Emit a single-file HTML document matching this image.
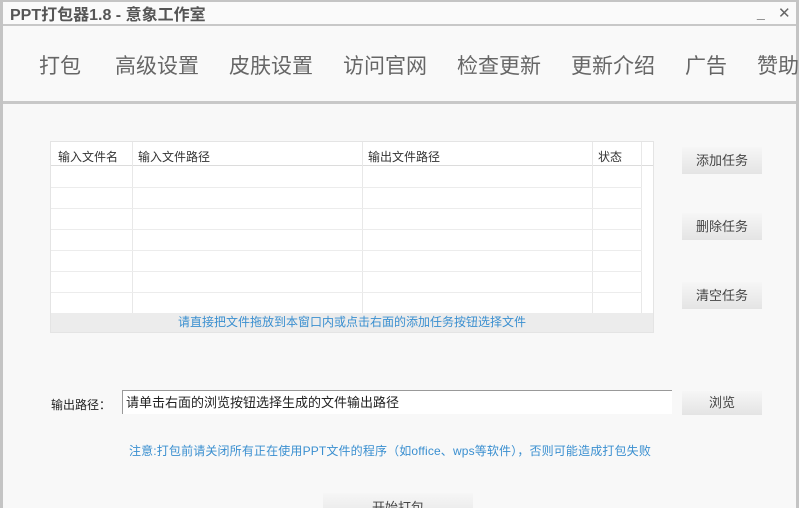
<!DOCTYPE html>
<html><head><meta charset="utf-8"><style>
*{margin:0;padding:0;box-sizing:border-box}
html,body{width:799px;height:508px;overflow:hidden}
body{background:#f8f8f8;font-family:"Liberation Sans","Noto Sans CJK SC","Microsoft YaHei",sans-serif;position:relative}
.a{position:absolute}
.frame{left:0;top:0;width:799px;height:508px;border-left:3px solid #c4c4c4;border-right:3px solid #c4c4c4;border-top:2px solid #c4c4c4}
.title{left:10px;top:1px;font-size:16px;font-weight:bold;color:#555}
.nav{top:50px;font-size:21px;color:#666}
.btn{background:linear-gradient(#f6f6f6,#e4e4e4);font-size:13px;color:#444;text-align:center;width:80px;height:27px;line-height:27px;left:682px}
.tbl{left:50px;top:141px;width:604px;height:192px;background:#fff;border:1px solid #e4e4e4}
.v{width:1px;background:#e8e8e8;top:0;height:172px}
.h{left:0;height:1px;background:#ececec;width:591px}
.th{top:6px;font-size:12px;color:#333}
</style></head><body>
<div class="a frame"></div>
<div class="a" style="left:3px;top:2px;width:793px;height:22px;background:#fafafa"></div>
<div class="a" style="left:3px;top:24px;width:793px;height:2px;background:#c8c8c8"></div>
<div class="a title">PPT打包器1.8 - 意象工作室</div>
<div class="a" style="left:757px;top:4px;font-size:14px;color:#888">_</div>
<div class="a" style="left:778px;top:4px;font-size:15px;color:#666">✕</div>
<div class="a" style="left:3px;top:26px;width:793px;height:75px;background:#f9f9f9"></div>
<div class="a" style="left:3px;top:101px;width:793px;height:3px;background:#c8c8c8"></div>
<div class="a nav" style="left:39px">打包</div>
<div class="a nav" style="left:115px">高级设置</div>
<div class="a nav" style="left:229px">皮肤设置</div>
<div class="a nav" style="left:343px">访问官网</div>
<div class="a nav" style="left:457px">检查更新</div>
<div class="a nav" style="left:571px">更新介绍</div>
<div class="a nav" style="left:685px">广告</div>
<div class="a nav" style="left:757px">赞助</div>
<div class="a tbl">
<div class="a" style="left:0;top:0;width:602px;height:24px;background:#fff;border-bottom:1px solid #dcdcdc"></div>
<div class="a v" style="left:81px"></div><div class="a v" style="left:311px"></div><div class="a v" style="left:541px"></div><div class="a v" style="left:590px"></div>
<div class="a th" style="left:7px">输入文件名</div>
<div class="a th" style="left:87px">输入文件路径</div>
<div class="a th" style="left:317px">输出文件路径</div>
<div class="a th" style="left:547px">状态</div>
<div class="a h" style="top:45px"></div><div class="a h" style="top:66px"></div><div class="a h" style="top:87px"></div><div class="a h" style="top:108px"></div><div class="a h" style="top:129px"></div><div class="a h" style="top:150px"></div>
<div class="a" style="left:0;top:171px;width:602px;height:19px;background:#ececec;text-align:center;font-size:12px;line-height:19px;color:#3a8fd0">请直接把文件拖放到本窗口内或点击右面的添加任务按钮选择文件</div>
</div>
<div class="a btn" style="top:147px">添加任务</div>
<div class="a btn" style="top:213px">删除任务</div>
<div class="a btn" style="top:282px">清空任务</div>
<div class="a" style="left:51px;top:396px;font-size:12px;color:#222">输出路径：</div>
<div class="a" style="left:122px;top:390px;width:550px;height:24px;background:#fff;border-top:1px solid #999;border-left:1px solid #999;font-size:13px;line-height:24px;padding-left:3px;color:#222">请单击右面的浏览按钮选择生成的文件输出路径</div>
<div class="a btn" style="top:391px;height:24px;line-height:24px">浏览</div>
<div class="a" style="left:129px;top:442px;font-size:12px;color:#3a8fd0;letter-spacing:0.15px">注意:打包前请关闭所有正在使用PPT文件的程序（如office、wps等软件），否则可能造成打包失败</div>
<div class="a btn" style="left:323px;top:493px;width:150px;height:30px;line-height:30px">开始打包</div>
</body></html>
